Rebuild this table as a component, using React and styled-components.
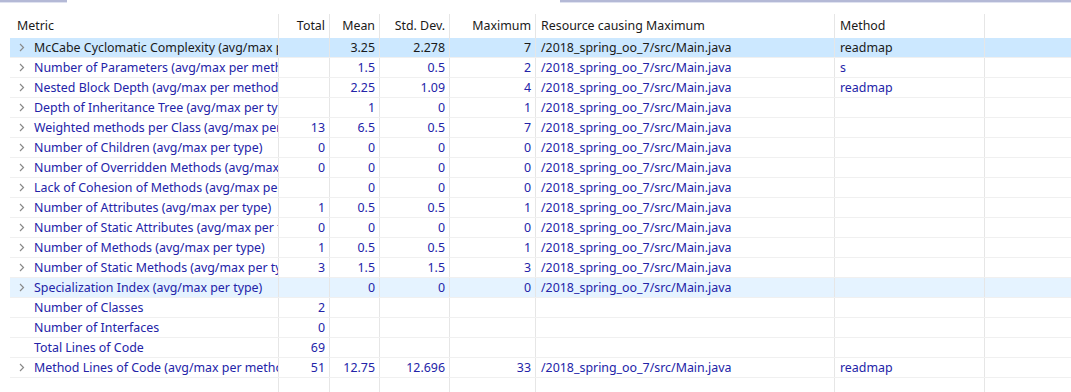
import React from 'react'
import styled, { createGlobalStyle } from 'styled-components'

const RES = '/2018_spring_oo_7/src/Main.java'

const metrics = [
  { name: 'McCabe Cyclomatic Complexity (avg/max per method)', total: '', mean: '3.25', std: '2.278', max: '7', res: RES, method: 'readmap', tree: true, state: 'selected' },
  { name: 'Number of Parameters (avg/max per method)', total: '', mean: '1.5', std: '0.5', max: '2', res: RES, method: 's', tree: true },
  { name: 'Nested Block Depth (avg/max per method)', total: '', mean: '2.25', std: '1.09', max: '4', res: RES, method: 'readmap', tree: true },
  { name: 'Depth of Inheritance Tree (avg/max per type)', total: '', mean: '1', std: '0', max: '1', res: RES, tree: true },
  { name: 'Weighted methods per Class (avg/max per type)', total: '13', mean: '6.5', std: '0.5', max: '7', res: RES, tree: true },
  { name: 'Number of Children (avg/max per type)', total: '0', mean: '0', std: '0', max: '0', res: RES, tree: true },
  { name: 'Number of Overridden Methods (avg/max per type)', total: '0', mean: '0', std: '0', max: '0', res: RES, tree: true },
  { name: 'Lack of Cohesion of Methods (avg/max per type)', total: '', mean: '0', std: '0', max: '0', res: RES, tree: true },
  { name: 'Number of Attributes (avg/max per type)', total: '1', mean: '0.5', std: '0.5', max: '1', res: RES, tree: true },
  { name: 'Number of Static Attributes (avg/max per type)', total: '0', mean: '0', std: '0', max: '0', res: RES, tree: true },
  { name: 'Number of Methods (avg/max per type)', total: '1', mean: '0.5', std: '0.5', max: '1', res: RES, tree: true },
  { name: 'Number of Static Methods (avg/max per type)', total: '3', mean: '1.5', std: '1.5', max: '3', res: RES, tree: true },
  { name: 'Specialization Index (avg/max per type)', total: '', mean: '0', std: '0', max: '0', res: RES, tree: true, state: 'hover' },
  { name: 'Number of Classes', total: '2' },
  { name: 'Number of Interfaces', total: '0' },
  { name: 'Total Lines of Code', total: '69' },
  { name: 'Method Lines of Code (avg/max per method)', total: '51', mean: '12.75', std: '12.696', max: '33', res: RES, method: 'readmap', tree: true },
]

const GlobalStyle = createGlobalStyle`
  body {
    margin: 0;
    background: #fff;
    font-family: "Noto Sans", "Open Sans", sans-serif;
    font-size: 12.4px;
    overflow: hidden;
  }
`

const Chevron = () => (
  <svg width="6" height="9" viewBox="0 0 6 9">
    <path d="M1 1 L4.5 4.5 L1 8" fill="none" stroke="#8a8a8a" strokeWidth="1.2" />
  </svg>
)

const App = () => {
  return (
    <Page>
      <GlobalStyle />
      <TabStrip>
        <TabEdge $w={67} />
        <Spacer />
        <TabEdge $w={511} />
      </TabStrip>
      <Table>
        <Row $head>
          <Cell $first $pad={7}>Metric</Cell>
          <Cell $num>Total</Cell>
          <Cell $num>Mean</Cell>
          <Cell $num>Std. Dev.</Cell>
          <Cell $num>Maximum</Cell>
          <Cell>Resource causing Maximum</Cell>
          <Cell>Method</Cell>
          <Cell $last />
        </Row>
        {metrics.map((m, i) => (
          <Row key={i} $state={m.state}>
            <Cell $first $pad={9}>
              <Expander>{m.tree && <Chevron />}</Expander>
              {m.name}
            </Cell>
            <Cell $num>{m.total}</Cell>
            <Cell $num>{m.mean}</Cell>
            <Cell $num>{m.std}</Cell>
            <Cell $num>{m.max}</Cell>
            <Cell>{m.res}</Cell>
            <Cell>{m.method}</Cell>
            <Cell $last />
          </Row>
        ))}
        <Row $filler>
          <Cell $first />
          <Cell />
          <Cell />
          <Cell />
          <Cell />
          <Cell />
          <Cell />
          <Cell $last />
        </Row>
      </Table>
    </Page>
  )
}

export default App

const Page = styled.div`
  width: 1071px;
  height: 392px;
  display: flex;
  flex-direction: column;
  overflow: hidden;
`

const TabStrip = styled.div`
  display: flex;
  height: 14px;
`

const TabEdge = styled.div`
  width: ${p => p.$w}px;
  height: 2px;
  background: #b4b9d6;
  border-bottom: 1px solid #dfe2f0;
`

const Spacer = styled.div`
  flex: 1;
`

const Table = styled.div`
  flex: 1;
  display: flex;
  flex-direction: column;
  margin-left: 10px;
`

const Row = styled.div`
  display: grid;
  grid-template-columns: 269px 51px 50px 70px 86px 299px 150px 1fr;
  height: ${p => (p.$head ? 24 : 20)}px;
  flex: ${p => (p.$filler ? 1 : 'none')};
  color: ${p => (p.$head || p.$state === 'selected' ? '#1a1a1a' : '#2323a8')};
  background: ${p =>
    p.$state === 'selected' ? '#cce8ff' : p.$state === 'hover' ? '#e5f3ff' : 'transparent'};
  border-bottom: ${p => (p.$head || p.$filler ? 'none' : '1px solid #f0f0f0')};
  box-sizing: border-box;
  line-height: ${p => (p.$head ? 22 : 19)}px;
`

const Cell = styled.div`
  display: flex;
  align-items: center;
  justify-content: ${p => (p.$num ? 'flex-end' : 'flex-start')};
  padding: ${p => (p.$num ? '0 4px 0 0' : `0 0 0 ${p.$first ? p.$pad || 0 : 5}px`)};
  border-right: ${p => (p.$last ? 'none' : '1px solid #e6e6e6')};
  white-space: nowrap;
  overflow: hidden;
  min-width: 0;
`

const Expander = styled.span`
  display: inline-flex;
  align-items: center;
  width: 15px;
  flex: none;
`
